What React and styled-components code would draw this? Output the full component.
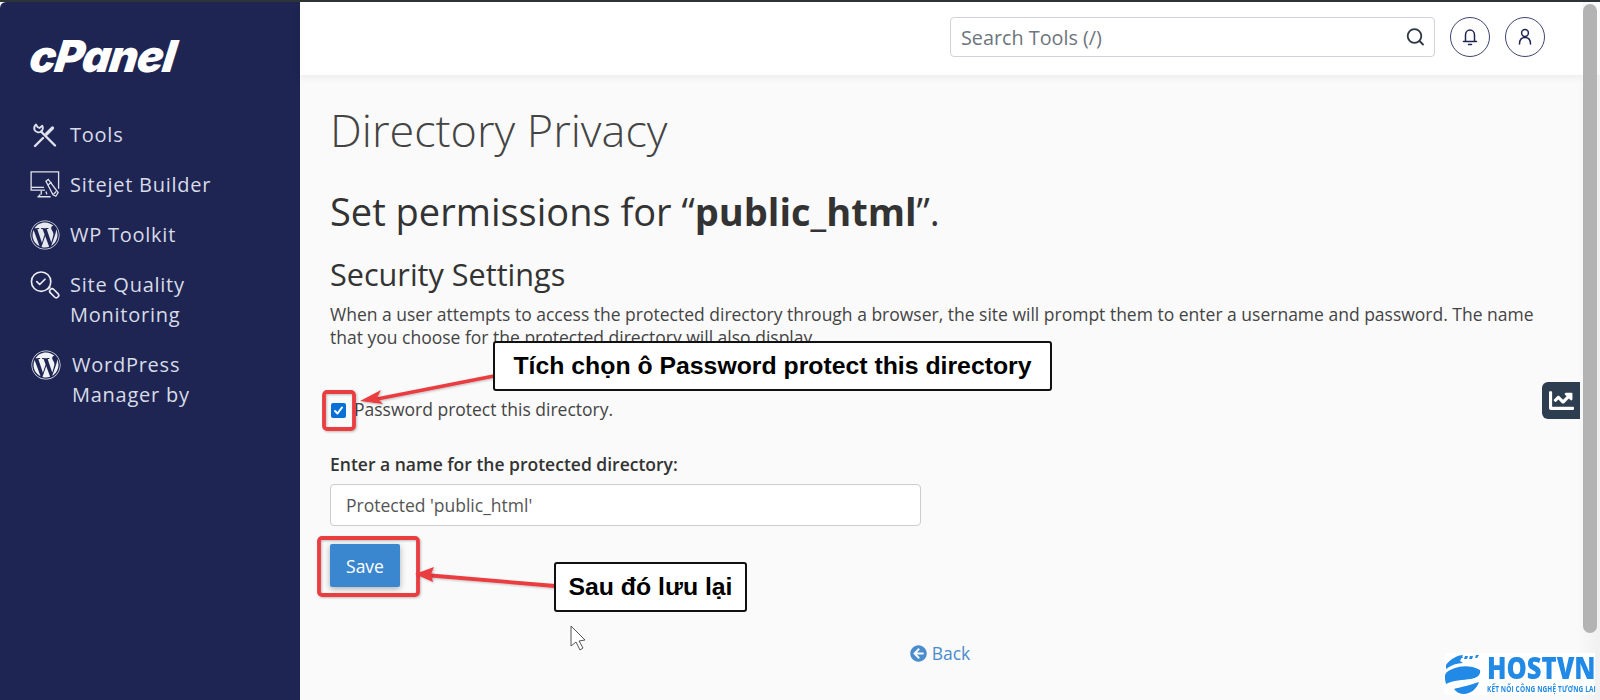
import React from 'react'
import styled, { createGlobalStyle } from 'styled-components'
import { FaWordpress, FaChartLine, FaArrowCircleLeft } from 'react-icons/fa'

const Global = createGlobalStyle`
html,body{margin:0;padding:0;width:1600px;height:700px;overflow:hidden;background:#fafafa;}
*{box-sizing:border-box;}
body{font-family:"Open Sans","Liberation Sans",sans-serif;color:#333;}
`

const Frame = styled.div`
position:relative;
width:1600px;
height:700px;
display:flex;
border-top:2px solid #2d3436;
background:#fafafa;
overflow:hidden;
`
const Sidebar = styled.aside`
width:300px;
flex:none;
background:#1f2553;
padding:30px 0 0 30px;
color:#d8dce6;
border-top-left-radius:6px;
`
const Logo = styled.div`
font-family:Inter,"Liberation Sans",sans-serif;
font-weight:900;
font-style:italic;
font-size:44px;
line-height:48px;
height:48px;
margin-left:-3px;
letter-spacing:-1.1px;
color:#fff;
transform:skewX(-8deg);
transform-origin:left bottom;
`
const Nav = styled.nav`
display:flex;
flex-direction:column;
gap:20px;
margin-top:40px;
`
const NavItem = styled.a`
display:flex;
align-items:flex-start;
gap:${p => p.$gap || 10}px;
padding-left:${p => p.$indent || 0}px;
font-size:20px;
line-height:30px;
letter-spacing:.75px;
color:#d8dce6;
`
const NavIcon = styled.span`
width:30px;
height:30px;
flex:none;
display:flex;
align-items:center;
justify-content:center;
svg{display:block;}
`
const Main = styled.main`
flex:1;
min-width:0;
display:flex;
flex-direction:column;
`
const Topbar = styled.header`
height:73px;
flex:none;
margin-right:17px;
background:#fff;
box-shadow:0 2px 8px rgba(0,0,0,.07);
display:flex;
align-items:center;
justify-content:flex-end;
gap:15px;
padding:0 38px 3px 0;
`
const Search = styled.div`
width:485px;
height:40px;
border:1px solid #cfd2dc;
border-radius:4px;
display:flex;
align-items:center;
justify-content:space-between;
padding:0 9px 0 10px;
font-size:19.8px;
color:#6d757d;
`
const Round = styled.button`
width:40px;
height:40px;
padding:0;
border-radius:50%;
border:1px solid #3d4570;
background:#fff;
display:flex;
align-items:center;
justify-content:center;
color:#1f2553;
`
const Content = styled.div`
flex:1;
padding:0 0 0 30px;
`
const Title = styled.h1`
margin:24px 0 0;
font-size:45px;
line-height:61px;
font-weight:300;
color:#444;
`
const Subtitle = styled.h2`
margin:25px 0 0;
font-size:38px;
line-height:52px;
font-weight:400;
color:#333;
b{font-weight:700;}
`
const Section = styled.h3`
margin:16px 0 0;
font-size:30.6px;
line-height:42px;
font-weight:400;
color:#333;
`
const Para = styled.p`
margin:8px 0 0;
width:1225px;
font-size:17.5px;
line-height:23px;
color:#444;
`
const CheckRow = styled.label`
display:flex;
align-items:center;
gap:8px;
margin:48px 0 0;
font-size:17.5px;
line-height:24px;
color:#444;
`
const Check = styled.span`
width:15px;
height:15px;
margin:3px 0 0 1px;
border-radius:2px;
background:#0b6fd8;
display:flex;
align-items:center;
justify-content:center;
`
const FieldLabel = styled.label`
display:block;
margin:31px 0 0;
font-size:17.5px;
line-height:24px;
font-weight:600;
color:#333;
`
const Input = styled.div`
width:591px;
height:42px;
margin-top:8px;
padding:0 15px;
display:flex;
align-items:center;
background:#fff;
border:1px solid #ccc;
border-radius:4px;
font-size:17.5px;
color:#555;
`
const SaveBtn = styled.button`
display:block;
width:70px;
height:43px;
margin-top:18px;
padding:0;
background:#3a87d0;
border:none;
border-radius:2px;
color:#fff;
font:400 17.5px "Open Sans",sans-serif;
box-shadow:0 2px 6px rgba(0,0,0,.3);
`
const BackRow = styled.div`
display:flex;
justify-content:center;
align-items:center;
gap:5px;
margin:54px 0 0 0;
width:1220px;
font-size:17.5px;
line-height:24px;
color:#4a8ccd;
`
const Scrollbar = styled.div`
position:absolute;
top:2px;
right:3px;
width:14px;
height:629px;
border-radius:7px;
background:#b3b3b3;
`
const Gutter = styled.div`
position:absolute;
top:73px;
right:0;
bottom:0;
width:24px;
background:linear-gradient(to right,rgba(0,0,0,0),rgba(0,0,0,.035) 85%,rgba(0,0,0,.035));
`
const ChartTab = styled.div`
position:absolute;
left:1542px;
top:380px;
width:38px;
height:37px;
background:#2c3e50;
border-radius:6px 0 0 6px;
color:#fff;
display:flex;
align-items:center;
justify-content:center;
`
const Overlay = styled.svg`
position:absolute;
left:0;
top:-2px;
width:1600px;
height:700px;
pointer-events:none;
`
const Callout = styled.div`
position:absolute;
left:${p => p.$x}px;
top:${p => p.$y}px;
width:${p => p.$w}px;
height:${p => p.$h}px;
background:#fff;
border:2px solid #111;
border-radius:3px;
display:flex;
align-items:center;
justify-content:center;
font-family:"Liberation Sans",sans-serif;
font-weight:700;
font-size:${p => p.$size}px;
color:#000;
white-space:nowrap;
`
const Badge = styled.div`
position:absolute;
left:1445px;
top:651px;
width:150px;
height:42px;
background:#fff;
display:flex;
gap:6px;
`
const BadgeMark = styled.svg`
flex:none;
width:36px;
height:42px;
`
const BadgeText = styled.div`
flex:1;
min-width:0;
display:flex;
flex-direction:column;
color:#2189e6;
font-family:"Open Sans",sans-serif;
white-space:nowrap;
`
const BadgeName = styled.span`
display:block;
width:108px;
margin-top:1px;
font-size:30px;
line-height:28px;
height:29px;
font-weight:800;
transform:scaleX(.85);
transform-origin:left center;
`
const BadgeTag = styled.span`
display:block;
width:108px;
font-size:9.5px;
line-height:11px;
font-weight:700;
letter-spacing:.2px;
transform:scaleX(.68);
transform-origin:left center;
`

const ToolsIcon = () => (
  <svg width="26" height="26" viewBox="0 0 26 26" fill="none" stroke="#dfe2ea" strokeWidth="2.4" strokeLinecap="round">
    <path d="M3 24L11 16" />
    <path d="M14.5 12L20.5 6" strokeWidth="3.2" />
    <path d="M9 9.5L23 23.5" strokeWidth="2.4" />
    <path d="M4 2.5a5 5 0 0 0-1.5 5.5 5 5 0 0 0 6.5 1.7 5 5 0 0 0 1.3-6L7.5 6 5.5 5z" strokeWidth="1.8" strokeLinejoin="round" />
  </svg>
)
const SitejetIcon = () => (
  <svg width="32" height="30" viewBox="0 0 32 30" fill="none" stroke="#dfe2ea" strokeWidth="1.4">
    <path d="M16 20.5H1.2V1H30.5V19" />
    <path d="M1.2 17.5H15" />
    <path d="M12 21v4M8 27.5h14M11 25l-2 2.5M17 22l1 3" />
    <path d="M17 11l2.5-2 10.5 14 -2.5 4-3 -1.500z" fill="#1f2553" />
    <path d="M19 15l4-3M25 25l3-3" />
  </svg>
)
const QualityIcon = () => (
  <svg width="31" height="31" viewBox="0 0 31 31" fill="none" stroke="#eceef4" strokeWidth="1.7" strokeLinecap="round" strokeLinejoin="round">
    <circle cx="11.5" cy="11.5" r="10" />
    <path d="M7 11.5l3 3 5.5-5.5" />
    <path d="M18.5 19l2-1.5" />
    <rect x="19.5" y="21" width="11" height="5" rx="2.5" transform="rotate(45 25 23.5)" />
  </svg>
)

const items = [
  { label: 'Tools', icon: <ToolsIcon /> },
  { label: 'Sitejet Builder', icon: <SitejetIcon /> },
  { label: 'WP Toolkit', icon: <FaWordpress size={30} color="#e6e8ef" /> },
  { label: <>Site Quality<br />Monitoring</>, icon: <QualityIcon /> },
  { label: <>WordPress<br />Manager by</>, icon: <FaWordpress size={30} color="#f2f3f7" />, indent: 1, gap: 11 },
]

export default function App() {
  return (
    <Frame>
      <Global />
      <Sidebar>
        <Logo>cPanel</Logo>
        <Nav>
          {items.map((item, i) => (
            <NavItem key={i} $indent={item.indent} $gap={item.gap}>
              <NavIcon>{item.icon}</NavIcon>
              <span>{item.label}</span>
            </NavItem>
          ))}
        </Nav>
      </Sidebar>
      <Main>
        <Topbar>
          <Search>
            <span>Search Tools (/)</span>
            <svg width="20" height="20" viewBox="0 0 20 20" fill="none" stroke="#2c3542" strokeWidth="1.8" strokeLinecap="round">
              <circle cx="9.5" cy="9" r="6.8" />
              <path d="M14.5 14l3.5 3.5" />
            </svg>
          </Search>
          <Round>
            <svg width="18" height="20" viewBox="0 0 18 20" fill="none" stroke="#1f2553" strokeWidth="1.5" strokeLinecap="round">
              <path d="M4.5 14V8a4.5 5 0 0 1 9 0v6" />
              <path d="M2.5 14.500h13M7.500 17.500h3" />
            </svg>
          </Round>
          <Round>
            <svg width="18" height="20" viewBox="0 0 18 20" fill="none" stroke="#1f2553" strokeWidth="1.5" strokeLinecap="round">
              <circle cx="9" cy="6" r="3.4" />
              <path d="M3.5 17c0-4 2-6.500 5.500-6.500s5.500 2.500 5.500 6.500" />
            </svg>
          </Round>
        </Topbar>
        <Content>
          <Title>Directory Privacy</Title>
          <Subtitle>Set permissions for “<b>public_html</b>”.</Subtitle>
          <Section>Security Settings</Section>
          <Para>When a user attempts to access the protected directory through a browser, the site will prompt them to enter a username and password. The name that you choose for the protected directory will also display.</Para>
          <CheckRow>
            <Check>
              <svg width="11" height="11" viewBox="0 0 11 11" fill="none" stroke="#fff" strokeWidth="2" strokeLinecap="round" strokeLinejoin="round">
                <path d="M2 6l2.500 2.500L9 2.500" />
              </svg>
            </Check>
            Password protect this directory.
          </CheckRow>
          <FieldLabel>Enter a name for the protected directory:</FieldLabel>
          <Input>Protected 'public_html'</Input>
          <SaveBtn>Save</SaveBtn>
          <BackRow><FaArrowCircleLeft size={17} />Back</BackRow>
        </Content>
      </Main>
      <Gutter />
      <Scrollbar />
      <ChartTab><FaChartLine size={25} /></ChartTab>
      <Overlay viewBox="0 0 1600 700">
        <defs>
          <filter id="soft" x="-10%" y="-10%" width="120%" height="120%">
            <feDropShadow dx="1" dy="1" stdDeviation="1" floodColor="#000" floodOpacity=".25" />
          </filter>
        </defs>
        <g fill="none" stroke="#ea3c41" strokeWidth="3.8" filter="url(#soft)">
          <rect x="324" y="392" width="30" height="37" rx="3" />
          <rect x="319" y="538" width="99" height="57" rx="3" />
          <path d="M494 376L372 400" />
          <path d="M555 586L425 575" />
        </g>
        <g fill="#ea3c41" filter="url(#soft)">
          <path d="M360 401L381 390L377 398L383 404Z" />
          <path d="M415 574L434 567L431 574L433 582Z" />
        </g>
        <path d="M571 626V646L576 642L580 650L583 648L579 641L585 640Z" fill="#fff" stroke="#555" strokeWidth="1" />
      </Overlay>
      <Callout $x={493} $y={339} $w={559} $h={50} $size={24.8}>Tích chọn ô Password protect this directory</Callout>
      <Callout $x={554} $y={560} $w={193} $h={50} $size={24.8}>Sau đó lưu lại</Callout>
      <Badge>
        <BadgeMark viewBox="0 0 36 42" fill="#2189e6">
          <path d="M1 12C6 5 14 2 18 2l-3 6 3 2c-6 0-12 2-17 6z" />
          <path d="M14 3h3l1 2h-4zM20 3h3l-1 3h-3zM25 3h3l-1 3h-3zM31 2h3l-2 3h-2z" />
          <path d="M1 20C8 14 22 10 35 17c1 5-3 8-9 9-8 1-18 1-25 5-1-4-2-8 0-11z" />
          <path d="M9 36c6-2 14-3 25-7-2 7-9 12-15 12-4 0-8-2-10-5z" />
        </BadgeMark>
        <BadgeText>
          <BadgeName>HOSTVN</BadgeName>
          <BadgeTag>KẾT NỐI CÔNG NGHỆ TƯƠNG LAI</BadgeTag>
        </BadgeText>
      </Badge>
    </Frame>
  )
}
